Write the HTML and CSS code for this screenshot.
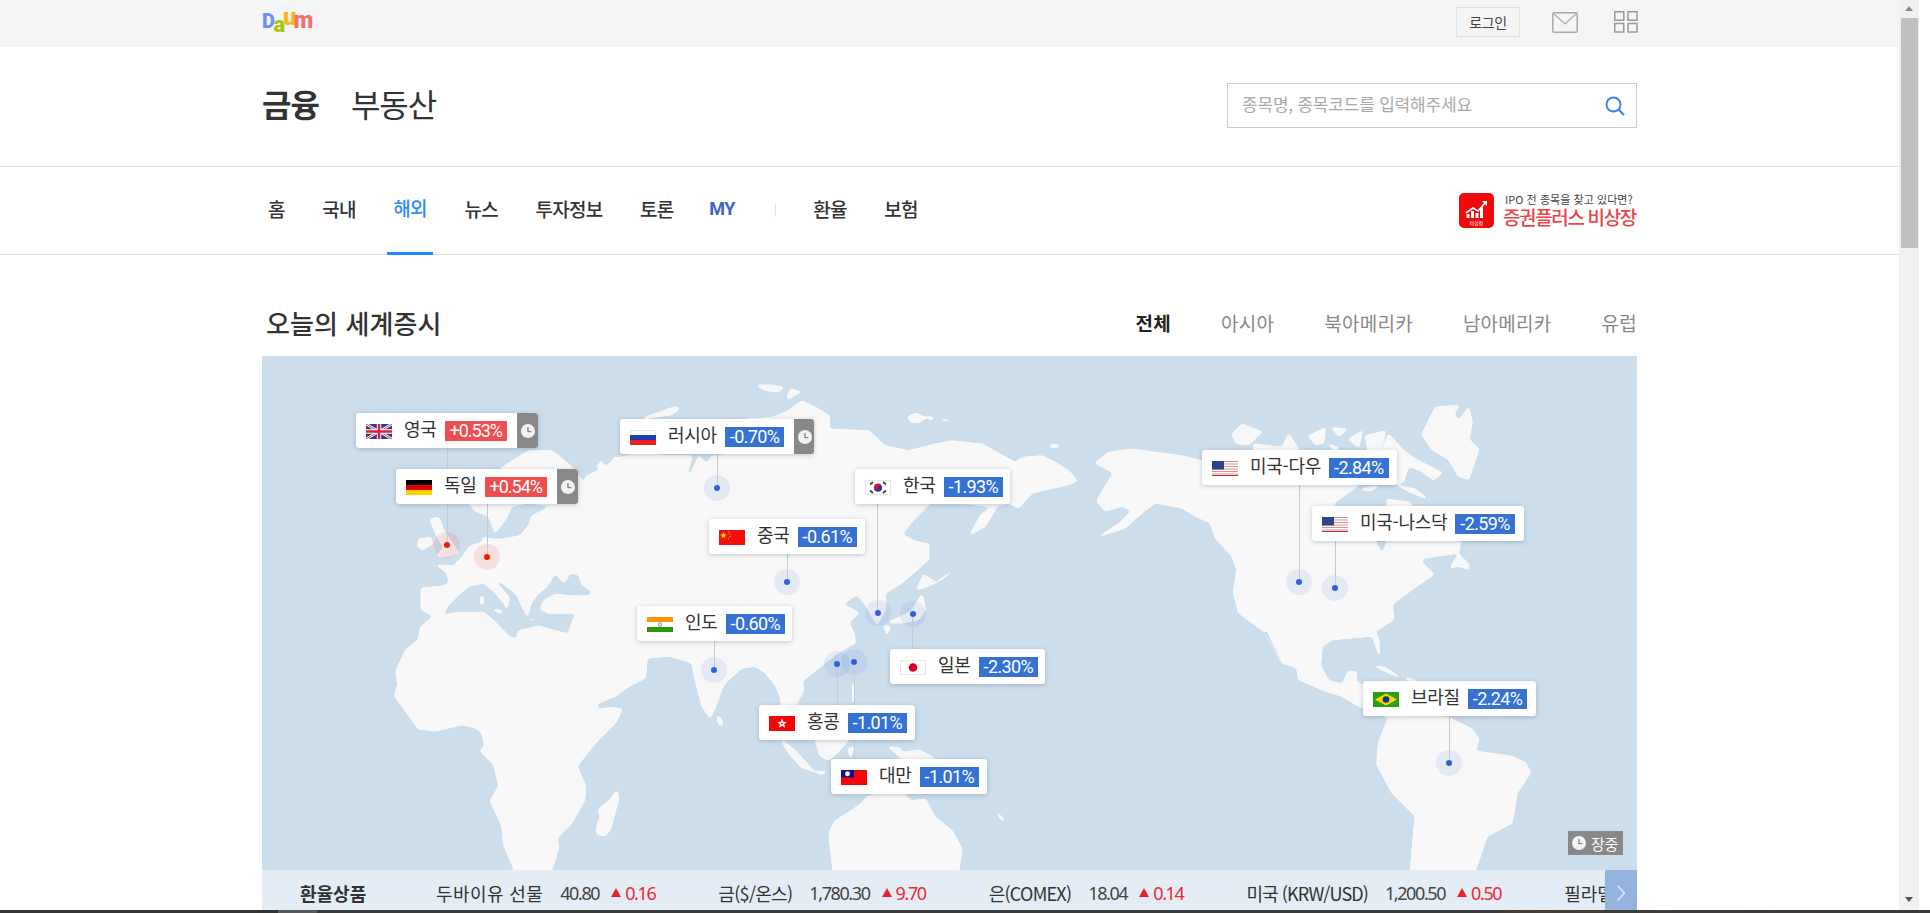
FILE: index.html
```html
<!DOCTYPE html>
<html lang="ko">
<head>
<meta charset="utf-8">
<title>세계증시</title>
<link rel="stylesheet" href="styles.css">
</head>
<body>
<svg class="defs" width="0" height="0" aria-hidden="true">
  <symbol id="clock" viewBox="0 0 14 14"><circle cx="7" cy="7" r="7" fill="#f4f4f4"/><path d="M7 3v4.600h3.400" fill="none" stroke="#888" stroke-width="1.400"/></symbol>
  <symbol id="us" viewBox="0 0 26 15">
    <rect width="26" height="15" fill="#fff"/>
    <path d="M0 .5h26M0 3h26M0 5.500h26M0 8h26M0 10.500h26M0 13h26" stroke="#dd8f98" stroke-width="1.200"/>
    <path d="M0 14.500h26" stroke="#cc2b3a" stroke-width="1"/>
    <rect width="12" height="8.500" fill="#2f4488"/>
  </symbol>
  <filter id="smooth" filterUnits="userSpaceOnUse" x="0" y="0" width="4125" height="1640">
    <feGaussianBlur stdDeviation="5"/>
    <feComponentTransfer><feFuncA type="linear" slope="6" intercept="-2.5"/></feComponentTransfer>
  </filter>
</svg>
<div class="screen">
  <div class="win">
    <div class="page">
      <div class="top">
        <div class="wrap top-in">
          <svg class="logo" width="56" height="26" viewBox="0 0 56 26" role="img" aria-label="Daum">
            <text class="lg"><tspan x="0" y="18" class="d">D</tspan><tspan x="11.500" y="22" class="a">a</tspan><tspan x="21" y="15" class="u">u</tspan><tspan x="31.500" y="18" class="m">m</tspan></text>
          </svg>
          <div class="top-right">
            <a class="login">로그인</a>
            <svg class="mail" width="26" height="21" viewBox="0 0 26 21"><rect x=".75" y=".75" width="24.500" height="19.500" rx="1.500" fill="none" stroke="#aaa" stroke-width="1.500"/><path d="M1.500 1.500 13 12 24.500 1.500" fill="none" stroke="#aaa" stroke-width="1.200"/></svg>
            <svg class="apps" width="24" height="22" viewBox="0 0 24 22"><g fill="none" stroke="#999" stroke-width="1.500"><rect x=".75" y=".75" width="9" height="8.500"/><rect x="14" y=".75" width="9" height="8.500"/><rect x=".75" y="12.500" width="9" height="8.500"/><rect x="14" y="12.500" width="9" height="8.500"/></g></svg>
          </div>
        </div>
      </div>

      <div class="brand">
        <div class="wrap brand-in">
          <div class="services"><strong>금융</strong><span>부동산</span></div>
          <form class="search">
            <input class="search-input" type="text" placeholder="종목명, 종목코드를 입력해주세요">
            <svg width="20" height="20" viewBox="0 0 20 20"><circle cx="8.500" cy="8.500" r="7" fill="none" stroke="#3a86f0" stroke-width="2"/><path d="m13.500 13.500 5.500 5.500" stroke="#3a86f0" stroke-width="2.200"/></svg>
          </form>
        </div>
      </div>

      <nav class="gnb">
        <div class="wrap gnb-in">
          <div class="menu">
            <a>홈</a><a>국내</a><a class="on">해외</a><a>뉴스</a><a>투자정보</a><a>토론</a><a class="my">MY</a><i class="sep"></i><a>환율</a><a>보험</a>
          </div>
          <div class="promo">
            <svg class="promo-ico" width="35" height="35" viewBox="0 0 35 35">
              <rect width="35" height="35" rx="5" fill="#ee0a0a"/>
              <path d="M9 21v4M13.500 18v7M18 20v5M22.500 14v11" stroke="#fff" stroke-width="3"/>
              <path d="M7 20l7-5 5 3 7-8" fill="none" stroke="#fff" stroke-width="1.600"/>
              <path d="M23 8h5v5z" fill="#fff"/>
              <text x="17.500" y="32" class="promo-mini">비상장</text>
            </svg>
            <div class="promo-text"><span class="p1">IPO 전 종목을 찾고 있다면?</span><span class="p2">증권플러스 비상장</span></div>
          </div>
        </div>
      </nav>

      <div class="wrap">
        <div class="sec-head">
          <h2>오늘의 세계증시</h2>
          <div class="tabs"><a class="on">전체</a><a>아시아</a><a>북아메리카</a><a>남아메리카</a><a>유럽</a></div>
        </div>

        <div class="map">
          <svg class="world" viewBox="0 0 4125 1542" width="1375" height="514" aria-hidden="true">
            <g class="land" filter="url(#smooth)">
              <polygon points="478,697 478,760 510,778 545,770 560,745 590,715 620,690 665,680 700,710 725,740 735,757 742,725 715,695 690,665 720,680 765,715 780,750 797,780 805,745 825,715 855,690 880,650 905,680 925,650 950,655 960,685 990,705 985,720 930,720 880,715 845,735 835,760 860,772 945,772 930,800 920,835 880,825 830,810 770,825 765,850 745,845 690,790 665,770 590,770 510,785 475,815 470,850 430,885 402,945 408,985 398,1020 470,1118 520,1125 600,1105 640,1115 660,1130 668,1170 655,1185 695,1225 712,1290 685,1335 720,1410 725,1465 755,1535 752,1600 850,1600 890,1475 885,1445 930,1400 968,1330 970,1290 945,1230 1000,1160 1060,1100 1080,1060 1050,1055 1010,1060 1000,1045 1060,1020 1100,990 1150,965 1155,905 1225,900 1290,920 1300,970 1320,1050 1345,1085 1365,1040 1380,995 1395,975 1440,935 1480,930 1510,950 1540,985 1555,1020 1560,1060 1595,1060 1625,1000 1620,975 1670,935 1720,895 1780,860 1775,830 1760,800 1790,770 1740,745 1785,715 1810,745 1845,805 1870,760 1870,710 1920,680 2000,610 2000,565 1955,555 1920,535 1955,490 2005,440 2115,442 2190,452 2155,480 2125,535 2170,510 2205,450 2240,440 2270,455 2310,410 2420,385 2445,375 2420,345 2380,320 2340,300 2280,305 2260,320 2160,265 2070,255 2020,265 1940,285 1870,270 1820,225 1700,220 1702,180 1670,160 1620,135 1580,165 1530,185 1450,190 1380,300 1350,300 1335,325 1310,300 1285,360 1275,350 1290,300 1230,300 1120,293 1075,305 1050,318 1020,340 975,360 965,380 925,330 870,285 800,285 720,335 620,440 640,465 680,480 700,530 730,490 750,450 800,440 870,450 810,480 800,510 775,540 720,550 690,550 665,545 660,560 625,570 600,605 575,630 525,628 555,650 562,680 545,690"/>
              <polygon points="505,490 530,485 545,525 575,570 590,590 560,600 525,600 545,575 520,530"/>
              <polygon points="470,550 505,545 512,562 480,582 468,570"/>
              <polygon points="1065,1305 1070,1325 1045,1420 1030,1438 1005,1435 1005,1410 1015,1385 1010,1360 1040,1335"/>
              <polygon points="655,722 663,722 663,745 657,745"/>
              <polygon points="695,760 720,765 720,772 700,765"/>
              <polygon points="800,788 825,792 810,792"/>
              <polygon points="1005,335 1018,315 1028,335"/>
              <polygon points="1050,315 1060,302 1072,312"/>
              <polygon points="1140,188 1190,170 1240,152 1252,158 1230,175 1170,185"/>
              <polygon points="1368,1078 1380,1095 1380,1110 1368,1100"/>
              <polygon points="2500,320 2540,290 2610,280 2760,300 2820,315 3040,290 3290,387 3210,445 3330,540 3340,555 3360,597 3375,560 3380,520 3375,430 3445,440 3450,455 3596,555 3590,590 3490,605 3460,625 3480,620 3515,655 3450,700 3390,745 3395,790 3340,825 3350,850 3352,900 3332,840 3210,850 3180,870 3175,930 3200,975 3240,985 3260,945 3285,950 3280,975 3320,1000 3460,1075 3560,1085 3630,1120 3650,1150 3640,1185 3665,1190 3745,1200 3790,1220 3805,1250 3765,1310 3750,1400 3675,1440 3620,1600 3440,1600 3450,1490 3460,1380 3390,1310 3345,1225 3350,1160 3380,1085 3290,1050 3240,1020 3190,1005 3110,970 3105,935 3060,920 3005,825 2930,770 2915,710 2925,640 2910,600 2860,545 2845,500 2800,480 2760,455 2680,440 2640,470 2590,515 2515,540 2575,500 2610,465 2580,450 2530,465 2505,435 2525,400 2555,350"/>
              <g transform="translate(1380 0)">
                <polygon points="105,88 150,88 185,95 165,108 130,102"/>
                <polygon points="195,130 205,98 235,108"/>
                <polygon points="300,208 320,208 310,212"/>
                <polygon points="558,183 580,172 612,185 590,200 565,197"/>
                <polygon points="615,182 635,185 625,192"/>
                <polygon points="655,188 690,195 670,194"/>
                <polygon points="982,268 1010,265 1008,273 990,274"/>
                <polygon points="585,700 605,655 640,680 605,695"/>
                <polygon points="600,715 610,760 590,790 540,800 500,800 530,785 570,765"/>
                <polygon points="485,810 505,812 495,835"/>
                <polygon points="640,680 690,645 660,670"/>
                <polygon points="178,1152 215,1180 275,1245 240,1235 200,1190"/>
                <polygon points="270,1245 312,1248 300,1255"/>
                <polygon points="280,1152 380,1152 345,1190 320,1212 295,1200"/>
                <polygon points="378,1178 395,1175 385,1205"/>
                <polygon points="392,985 397,985 396,1040 392,1036"/>
                <polygon points="500,1172 535,1178 540,1190 590,1182 640,1208 540,1208"/>
                <polygon points="322,1430 340,1395 410,1350 440,1320 540,1305 565,1335 610,1330 640,1385 690,1425 720,1480 700,1600 340,1600 325,1470"/>
                <polygon points="825,1370 848,1392 838,1392"/>
              </g>
              <g transform="translate(2760 0)">
                <polygon points="720,235 760,155 830,148 815,175 830,195 860,155 870,200 860,250 890,280 860,370 830,360 800,310 750,280"/>
                <polygon points="150,235 180,205 240,228 200,265 165,262"/>
                <polygon points="215,265 300,275 320,235 350,280 215,290"/>
                <polygon points="380,240 430,215 425,260 400,265"/>
                <polygon points="440,265 470,275 460,285"/>
                <polygon points="450,215 495,220 470,240"/>
                <polygon points="500,250 540,225 530,275"/>
                <polygon points="550,240 610,225 590,290 560,290"/>
                <polygon points="620,235 660,280 700,310 780,350 755,372 720,345 680,330 665,375 645,385 625,330 600,290"/>
                <polygon points="535,400 590,390 565,405"/>
                <polygon points="650,390 700,400 735,428 690,410"/>
                <polygon points="805,635 830,595 860,625 860,640 830,630"/>
                <polygon points="578,930 610,935 655,965 620,950"/>
                <polygon points="670,965 710,975 680,975"/>
              </g>
            </g>
            <g class="water" transform="translate(2760 0)">
              <polygon points="245,828 255,828 302,925"/>
              <polygon points="115,595 150,605 145,610"/>
            </g>
          </svg>

          <div class="pin red p-uk"><i class="line"></i></div>
          <div class="pin red p-de"><i class="line"></i></div>
          <div class="pin p-ru"><i class="line"></i></div>
          <div class="pin p-cn"><i class="line"></i></div>
          <div class="pin p-in"><i class="line"></i></div>
          <div class="pin p-kr"><i class="line"></i></div>
          <div class="pin p-jp"><i class="line down"></i></div>
          <div class="pin p-hk"><i class="line down"></i></div>
          <div class="pin p-tw"><i class="line down"></i></div>
          <div class="pin p-dow"><i class="line"></i></div>
          <div class="pin p-nas"><i class="line"></i></div>
          <div class="pin p-br"><i class="line"></i></div>

          <div class="card c-uk">
            <svg class="flag" viewBox="0 0 26 15"><rect width="26" height="15" fill="#2a3a8c"/><path d="M0 0l26 15M26 0 0 15" stroke="#fff" stroke-width="2.600"/><path d="M0 0l26 15M26 0 0 15" stroke="#d8203a" stroke-width=".9"/><path d="M13 0v15M0 7.500h26" stroke="#fff" stroke-width="4.500"/><path d="M13 0v15M0 7.500h26" stroke="#e0203a" stroke-width="2.600"/></svg>
            <span class="nm">영국</span><b class="val up">+0.53%</b><span class="tm"><svg class="ck" width="14" height="14"><use href="#clock"/></svg></span>
          </div>
          <div class="card c-de">
            <svg class="flag" viewBox="0 0 26 15"><rect width="26" height="5" fill="#000"/><rect y="5" width="26" height="5" fill="#e00000"/><rect y="10" width="26" height="5" fill="#ffce00"/></svg>
            <span class="nm">독일</span><b class="val up">+0.54%</b><span class="tm"><svg class="ck" width="14" height="14"><use href="#clock"/></svg></span>
          </div>
          <div class="card c-ru">
            <svg class="flag" viewBox="0 0 26 15"><rect width="26" height="5" fill="#fff"/><path d="M.5 5V.5h25V5" fill="none" stroke="#e5e5e5"/><rect y="5" width="26" height="5" fill="#1f3fb0"/><rect y="10" width="26" height="5" fill="#f01c1c"/></svg>
            <span class="nm">러시아</span><b class="val dn">-0.70%</b><span class="tm"><svg class="ck" width="14" height="14"><use href="#clock"/></svg></span>
          </div>
          <div class="card c-kr">
            <svg class="flag" viewBox="0 0 26 15"><rect x=".5" y=".5" width="25" height="14" fill="#fff" stroke="#e6e6e6"/><path d="M8 13 5 10.500M18 2l3 2.500M8 2 5 4.500M18 13l3-2.500" stroke="#444" stroke-width="1.800"/><circle cx="13" cy="7.500" r="4" fill="#d8142c"/><path d="M9 7.500a4 4 0 0 0 8 0 2 2 0 0 0-4 0 2 2 0 0 1-4 0z" fill="#1f3c9c"/></svg>
            <span class="nm">한국</span><b class="val dn">-1.93%</b>
          </div>
          <div class="card c-cn">
            <svg class="flag" viewBox="0 0 26 15"><rect width="26" height="15" fill="#f60f0f"/><path d="M4.500 2l.9 2.300 2.400.1-1.900 1.500.7 2.400-2.100-1.400-2.100 1.400.7-2.400L1.200 4.400l2.400-.1z" fill="#ffd800"/><circle cx="9.500" cy="2" r=".6" fill="#ffd800"/><circle cx="11" cy="4" r=".6" fill="#ffd800"/><circle cx="11" cy="6.500" r=".6" fill="#ffd800"/><circle cx="9.500" cy="8.500" r=".6" fill="#ffd800"/></svg>
            <span class="nm">중국</span><b class="val dn">-0.61%</b>
          </div>
          <div class="card c-in">
            <svg class="flag" viewBox="0 0 26 15"><rect width="26" height="5" fill="#ff9400"/><rect y="5" width="26" height="5" fill="#fff"/><rect y="10" width="26" height="5" fill="#2c9a08"/><circle cx="13" cy="7.500" r="2.200" fill="#a6aec9"/><circle cx="13" cy="7.500" r=".8" fill="#fff"/></svg>
            <span class="nm">인도</span><b class="val dn">-0.60%</b>
          </div>
          <div class="card c-jp">
            <svg class="flag" viewBox="0 0 26 15"><rect x=".5" y=".5" width="25" height="14" fill="#fff" stroke="#e6e6e6"/><circle cx="13" cy="7.500" r="4.300" fill="#d2002a"/></svg>
            <span class="nm">일본</span><b class="val dn">-2.30%</b>
          </div>
          <div class="card c-hk">
            <svg class="flag" viewBox="0 0 26 15"><rect width="26" height="15" fill="#f60505"/><path d="M13 2.500l1.400 3.200 3.500.3-2.600 2.300.8 3.400-3.100-1.800-3.100 1.800.8-3.400L8.100 6l3.500-.3z" fill="#ffe6e6"/><circle cx="13" cy="7.500" r=".8" fill="#f60505"/></svg>
            <span class="nm">홍콩</span><b class="val dn">-1.01%</b>
          </div>
          <div class="card c-tw">
            <svg class="flag" viewBox="0 0 26 15"><rect width="26" height="15" fill="#f60505"/><rect width="13" height="7.500" fill="#0c0c9a"/><circle cx="6.500" cy="3.750" r="2.400" fill="#fff"/></svg>
            <span class="nm">대만</span><b class="val dn">-1.01%</b>
          </div>
          <div class="card c-dow">
            <svg class="flag" viewBox="0 0 26 15"><use href="#us"/></svg>
            <span class="nm">미국-다우</span><b class="val dn">-2.84%</b>
          </div>
          <div class="card c-nas">
            <svg class="flag" viewBox="0 0 26 15"><use href="#us"/></svg>
            <span class="nm">미국-나스닥</span><b class="val dn">-2.59%</b>
          </div>
          <div class="card c-br">
            <svg class="flag" viewBox="0 0 26 15"><rect width="26" height="15" fill="#27a018"/><path d="M13 1.500 24 7.500 13 13.500 2 7.500z" fill="#fdd800"/><circle cx="13" cy="7.500" r="3.300" fill="#1a2f80"/></svg>
            <span class="nm">브라질</span><b class="val dn">-2.24%</b>
          </div>

          <div class="legend"><svg width="14" height="14"><use href="#clock"/></svg><span>장중</span></div>
        </div>

        <div class="ticker">
          <strong class="tk-title">환율상품</strong>
          <div class="tk-list">
            <div class="tk"><span class="tk-n wide">두바이유 선물</span><span class="tk-v">40.80</span><i class="tri"></i><span class="tk-c">0.16</span></div>
            <div class="tk"><span class="tk-n t-gold">금($/온스)</span><span class="tk-v">1,780.30</span><i class="tri"></i><span class="tk-c">9.70</span></div>
            <div class="tk"><span class="tk-n t-silver">은(COMEX)</span><span class="tk-v">18.04</span><i class="tri"></i><span class="tk-c">0.14</span></div>
            <div class="tk"><span class="tk-n tight">미국 (KRW/USD)</span><span class="tk-v">1,200.50</span><i class="tri"></i><span class="tk-c">0.50</span></div>
            <div class="tk"><span class="tk-n">필라델피아 반도체</span></div>
          </div>
          <a class="tk-next"><svg width="10" height="18" viewBox="0 0 10 18"><path d="m1.500 1.500 7 7.500-7 7.500" fill="none" stroke="#e8eef7" stroke-width="1.300"/></svg></a>
        </div>
      </div>
    </div>
    <div class="sbar">
      <i class="ar up"></i>
      <div class="thumb"></div>
      <i class="ar dn"></i>
    </div>
    <div class="gutter"></div>
  </div>
  <div class="taskbar"></div>
</div>
</body>
</html>
```

FILE: styles.css
```css
* { box-sizing: border-box; }
html, body { margin: 0; height: 100%; overflow: hidden; background: #fff; }
body { font-family: "Noto Sans CJK KR", "Noto Sans", sans-serif; color: #333; }
a { color: inherit; text-decoration: none; }
i { font-style: normal; display: block; }
.defs { position: absolute; }

.screen { display: flex; flex-direction: column; height: 913px; }
.win { display: flex; height: 910px; }
.page { width: 1899px; height: 910px; overflow: hidden; }
.wrap { width: 1375px; margin: 0 auto; }
.taskbar { height: 3px; background: linear-gradient(90deg, #333 0, #333 278px, #5a5a5a 278px, #5a5a5a 317px, #3a3a3a 317px, #3a3a3a 1500px, #453c34 1500px, #3a3a3a 1930px); }

.sbar { width: 20px; background: #f1f1f1; display: flex; flex-direction: column; align-items: center; padding-top: 6px; }
.thumb { width: 17px; height: 230px; background: #c0c0c0; margin-top: 7px; }
.ar { width: 0; height: 0; border-left: 4.5px solid transparent; border-right: 4.5px solid transparent; }
.ar.up { border-bottom: 5px solid #888; }
.ar.dn { border-top: 5px solid #555; margin-top: auto; margin-bottom: 8px; }
.gutter { flex: 1; background: #fff; }

/* top bar */
.top { height: 47px; background: #f5f5f5; }
.top-in { height: 47px; display: flex; justify-content: space-between; align-items: flex-start; }
.logo { margin-top: 10px; display: block; overflow: visible; }
.lg { font-family: Roboto, sans-serif; font-weight: 900; }
.lg .d { fill: #6a93f2; font-size: 20px; }
.lg .a { fill: #a6c40c; font-size: 22px; }
.lg .u { fill: #fdb515; font-size: 24px; }
.lg .m { fill: #f2706c; font-size: 23px; }
.top-right { display: flex; align-items: flex-start; }
.login { width: 64px; height: 30px; margin: 7px 32px 0 0; border: 1px solid #e2e2e2; font-size: 14px; letter-spacing: -.4px; display: flex; align-items: center; justify-content: center; color: #444; }
.mail { margin: 12px 36px 0 0; display: block; }
.apps { margin-top: 11px; display: block; margin-right: -1px; }

/* brand */
.brand { height: 120px; border-bottom: 1px solid #e2e2e2; }
.brand-in { height: 119px; display: flex; justify-content: space-between; align-items: center; }
.services { display: flex; gap: 32px; font-size: 32px; line-height: 40px; letter-spacing: -1px; color: #333; margin-top: -7px; }
.services strong { font-weight: 700; }
.services span { font-weight: 400; }
.search { width: 410px; height: 45px; border: 1px solid #ccc; display: flex; align-items: center; padding: 0 11px 0 14px; margin-top: -2px; }
.search-input { flex: 1; border: 0; outline: 0; background: none; padding: 0; font: 400 17px "Noto Sans CJK KR", sans-serif; letter-spacing: -.2px; min-width: 0; margin-top: -4px; }
.search-input::placeholder { color: #aaa; opacity: 1; }

/* nav */
.gnb { height: 88px; border-bottom: 1px solid #dfdfdf; }
.gnb-in { height: 87px; display: flex; justify-content: space-between; align-items: center; }
.menu { display: flex; align-items: stretch; height: 87px; padding-left: 6px; gap: 37.5px; font-size: 19px; font-weight: 500; letter-spacing: -.7px; color: #333; }
.menu a { display: flex; align-items: center; padding-bottom: 4px; }
.menu a.on { color: #2b8dff; margin: 0 -6px -1px; padding: 0 6px 4px; border-bottom: 3px solid #1e88ff; }
.menu a.my { color: #3a66c4; font-family: Roboto, sans-serif; font-size: 18px; font-weight: 700; letter-spacing: -.3px; margin: 0 2px 0 -2px; }
.sep { width: 1px; height: 14px; background: #e4e4e4; align-self: center; margin-top: -2px; }
.promo { display: flex; align-items: center; gap: 9px; padding-right: 1px; }
.promo-ico { display: block; }
.promo-mini { font-size: 5px; fill: #fff; text-anchor: middle; }
.promo-text { display: flex; flex-direction: column; }
.p1 { font-size: 11px; line-height: 13px; letter-spacing: .05px; color: #444; padding-left: 2px; }
.p2 { font-size: 19px; line-height: 22px; font-weight: 500; letter-spacing: -1.35px; color: #e5474b; }

/* section head */
.sec-head { height: 101px; display: flex; justify-content: space-between; align-items: flex-end; padding: 0 0 16px 4px; }
.sec-head h2 { margin: 0; font-size: 26px; line-height: 34px; font-weight: 500; letter-spacing: .1px; color: #333; }
.tabs { display: flex; gap: 50px; font-size: 19px; line-height: 34px; letter-spacing: .25px; color: #888; }
.tabs .on { color: #222; font-weight: 700; }

/* map */
.map { position: relative; height: 514px; background: #ccdeec; overflow: hidden; }
.world { position: absolute; left: 0; top: 0; display: block; }
.land { fill: #f8f8f8; stroke: #f8f8f8; stroke-width: 5; stroke-linejoin: round; }
.water { fill: #ccdeec; }

.pin { position: absolute; width: 26px; height: 26px; margin: -13px 0 0 -13px; border-radius: 50%; background: rgba(70, 110, 225, .1); }
.pin::after { content: ""; position: absolute; left: 10px; top: 10px; width: 6px; height: 6px; border-radius: 50%; background: #2f62d8; }
.pin.red { background: rgba(240, 60, 40, .12); }
.pin.red::after { background: #f01c00; }
.line { position: absolute; left: 13px; bottom: 13px; width: 1px; background: #c6cbd0; }
.line.down { bottom: auto; top: 13px; }
.p-uk { left: 185px; top: 189px; } .p-uk .line { height: 97px; }
.p-de { left: 225px; top: 201px; } .p-de .line { height: 53px; }
.p-ru { left: 455px; top: 132px; } .p-ru .line { height: 34px; }
.p-cn { left: 525px; top: 226px; } .p-cn .line { height: 28px; }
.p-in { left: 452px; top: 314px; } .p-in .line { height: 29px; }
.p-kr { left: 616px; top: 257px; } .p-kr .line { height: 109px; left: 12px; }
.p-jp { left: 651px; top: 258px; } .p-jp .line { height: 35px; left: 12px; }
.p-hk { left: 575px; top: 308px; } .p-hk .line { height: 41px; }
.p-tw { left: 592px; top: 306px; } .p-tw .line { height: 97px; }
.p-dow { left: 1037px; top: 226px; } .p-dow .line { height: 97px; }
.p-nas { left: 1073px; top: 232px; } .p-nas .line { height: 47px; }
.p-br { left: 1187px; top: 407px; } .p-br .line { height: 47px; }

.card { position: absolute; height: 35px; background: #fff; border-radius: 3px; box-shadow: 0 1px 5px rgba(60, 70, 80, .28); display: flex; align-items: center; padding-left: 10px; overflow: hidden; }
.flag { width: 26px; height: 15px; flex: none; display: block; margin-top: 1px; }
.nm { margin: -6px 8px 0 12px; font-size: 18px; line-height: 22px; letter-spacing: -.3px; color: #333; white-space: nowrap; }
.val { height: 20px; padding: 0 5px; font-family: Roboto, sans-serif; font-weight: 400; font-size: 18px; line-height: 20px; letter-spacing: -.6px; color: #fff; margin-right: 10px; white-space: nowrap; }
.val.up { background: #ee4e50; letter-spacing: -1px; }
.val.dn { background: #3672d4; }
.tm { align-self: stretch; width: 21px; background: #888; margin-left: auto; display: flex; align-items: center; justify-content: center; flex: none; }
.ck { display: block; }
.c-uk { left: 94px; top: 57px; width: 182px; }
.c-de { left: 134px; top: 113px; width: 182px; }
.c-ru { left: 358px; top: 63px; width: 194px; }
.c-kr { left: 593px; top: 113px; width: 155px; }
.c-cn { left: 447px; top: 163px; width: 156px; }
.c-in { left: 375px; top: 250px; width: 155px; }
.c-jp { left: 628px; top: 293px; width: 155px; }
.c-hk { left: 497px; top: 349px; width: 156px; }
.c-tw { left: 569px; top: 403px; width: 156px; }
.c-dow { left: 940px; top: 94px; width: 195px; }
.c-nas { left: 1050px; top: 150px; width: 212px; }
.c-br { left: 1101px; top: 325px; width: 173px; }

.legend { position: absolute; left: 1306px; top: 475px; width: 55px; height: 24px; background: #888; display: flex; align-items: center; gap: 5px; padding-left: 4px; color: #fff; font-size: 15px; letter-spacing: -.4px; }

/* ticker */
.ticker { height: 40px; background: #e4edf5; display: flex; align-items: center; overflow: hidden; position: relative; }
.tk-title { width: 174px; flex: none; padding: 5px 0 0 38px; font-size: 18px; font-weight: 700; letter-spacing: 0; color: #333; }
.tk-list { display: flex; gap: 63px; flex: 1; min-width: 0; font-size: 18px; white-space: nowrap; overflow: hidden; height: 40px; align-items: center; padding-top: 5px; }
.tk { display: flex; align-items: center; flex: none; }
.tk-n { color: #333; letter-spacing: 0; }
.tk-n.wide { letter-spacing: .4px; }
.tk-n.t-gold { letter-spacing: -.7px; }
.tk-n.t-silver { letter-spacing: -.75px; }
.tk-n.tight { letter-spacing: -.9px; }
.tk-v { color: #444; margin-left: 17px; letter-spacing: -1.4px; font-family: "Noto Sans", sans-serif; }
.tri { width: 0; height: 0; margin: 0 4px 0 12px; border-left: 5.5px solid transparent; border-right: 5.5px solid transparent; border-bottom: 9px solid #e8222a; }
.tk-c { color: #f0282e; letter-spacing: -1.4px; font-family: "Noto Sans", sans-serif; }
.tk-next { width: 32px; height: 40px; flex: none; background: #94b4de; display: flex; align-items: center; justify-content: center; padding-top: 5px; }
```
